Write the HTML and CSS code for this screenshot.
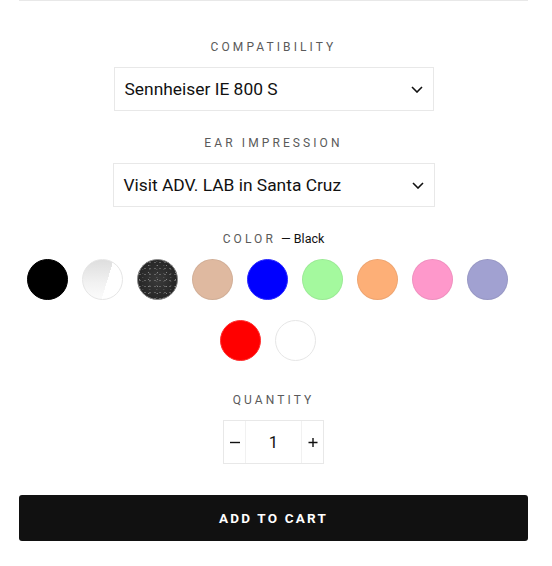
FILE: index.html
```html
<!DOCTYPE html>
<html lang="en">
<head>
<meta charset="utf-8">
<title>Product form</title>
<link rel="stylesheet" href="styles.css">
</head>
<body>
<form class="product-form">
  <div class="field">
    <div class="field-label">Compatibility</div>
    <div class="select select-compat">
      <span class="select-value">Sennheiser IE 800 S</span>
      <svg class="chevron" width="12" height="7" viewBox="0 0 12 7"><path d="M1 1l5 5 5-5" fill="none" stroke="#111" stroke-width="1.6"/></svg>
    </div>
  </div>
  <div class="field">
    <div class="field-label">Ear Impression</div>
    <div class="select select-ear">
      <span class="select-value">Visit ADV. LAB in Santa Cruz</span>
      <svg class="chevron" width="12" height="7" viewBox="0 0 12 7"><path d="M1 1l5 5 5-5" fill="none" stroke="#111" stroke-width="1.6"/></svg>
    </div>
  </div>
  <div class="field field-color">
    <div class="field-label">Color<span class="field-current">— Black</span></div>
    <div class="swatches">
      <span class="swatch swatch-black"></span>
      <span class="swatch swatch-clear"></span>
      <span class="swatch swatch-glitter"></span>
      <span class="swatch swatch-tan"></span>
      <span class="swatch swatch-blue"></span>
      <span class="swatch swatch-green"></span>
      <span class="swatch swatch-orange"></span>
      <span class="swatch swatch-pink"></span>
      <span class="swatch swatch-lavender"></span>
      <span class="swatch swatch-red"></span>
      <span class="swatch swatch-white"></span>
    </div>
  </div>
  <div class="field">
    <div class="field-label">Quantity</div>
    <div class="qty">
      <span class="qty-btn" aria-label="Decrease"><svg width="10" height="10" viewBox="0 0 10 10"><path d="M0 5.5h10" stroke="#111" stroke-width="1.4"/></svg></span>
      <span class="qty-value">1</span>
      <span class="qty-btn" aria-label="Increase"><svg width="10" height="10" viewBox="0 0 10 10"><path d="M0.5 5.5h9M5 1v9" stroke="#111" stroke-width="1.4"/></svg></span>
    </div>
  </div>
  <button type="button" class="add-to-cart">Add to cart</button>
</form>
</body>
</html>
```
FILE: styles.css
```css
html, body {
  margin: 0;
  padding: 0;
  background: #fff;
}
body {
  font-family: Roboto, "Liberation Sans", sans-serif;
  color: #111;
}
.product-form {
  margin: 0 24px 0 19px;
  border-top: 1px solid #e8e8e8;
  padding-top: 36px;
  display: flex;
  flex-direction: column;
  align-items: center;
}
.field {
  display: flex;
  flex-direction: column;
  align-items: center;
  gap: 11px;
  margin-bottom: 22px;
  width: 100%;
}
.field-color {
  margin-bottom: 29px;
}
.field-label {
  padding-top: 1px;
  font-size: 12px;
  line-height: 18px;
  letter-spacing: 3.1px;
  text-transform: uppercase;
  color: #5a5a5a;
  text-align: center;
}
.field-current {
  letter-spacing: 0;
  text-transform: none;
  color: #111;
  font-size: 12.5px;
  margin-left: 5px;
}
.select {
  box-sizing: border-box;
  height: 44px;
  border: 1px solid #e8e8e8;
  display: flex;
  align-items: center;
  justify-content: space-between;
  padding: 0 10px 0 10px;
  font-size: 17.4px;
  color: #111;
}
.select-compat { width: 320px; }
.select-ear { width: 322px; }
.chevron { flex: none; }
.swatches {
  box-sizing: border-box;
  width: 100%;
  padding-right: 12px;
  display: flex;
  flex-wrap: wrap;
  justify-content: center;
  gap: 20px 14px;
}
.swatch {
  box-sizing: border-box;
  width: 41px;
  height: 41px;
  border-radius: 50%;
  border: 1px solid rgba(0, 0, 0, 0.06);
}
.swatch-black { background: #000; border-color: #000; }
.swatch-clear {
  border-color: #e6e6e6;
  background:
    linear-gradient(107deg, transparent 60%, #fff 60%),
    linear-gradient(180deg, #dedede 0%, #f2f2f2 60%, #fbfbfb 100%);
}
.swatch-glitter {
  border-color: #8a8a8a;
  background-color: #2b2b2b;
  background-image:
    radial-gradient(circle at 40% 40%, #a8a8a8 0, rgba(168,168,168,0) 0.9px),
    radial-gradient(circle at 70% 30%, #7c7c7c 0, rgba(124,124,124,0) 0.8px),
    radial-gradient(circle at 20% 80%, #c8c8c8 0, rgba(200,200,200,0) 0.7px),
    radial-gradient(circle at 50% 50%, #3a3a3a 0, #1e1e1e 100%);
  background-size: 5px 6px, 7px 4px, 9px 7px, 100% 100%;
}
.swatch-tan { background: #dfb9a0; }
.swatch-blue { background: #0000ff; border-color: #2a2aff; }
.swatch-green { background: #a4f99e; }
.swatch-orange { background: #fdaf77; }
.swatch-pink { background: #fe98cb; }
.swatch-lavender { background: #a1a1d1; }
.swatch-red { background: #ff0000; border-color: #ff3030; }
.swatch-white { background: #fff; border-color: #e6e6e6; }
.qty {
  display: flex;
  height: 44px;
  border: 1px solid #e8e8e8;
  box-sizing: border-box;
}
.qty-btn {
  width: 21px;
  display: flex;
  align-items: center;
  justify-content: center;
}
.qty-value {
  box-sizing: border-box;
  width: 57px;
  border-left: 1px solid #f1f1f1;
  border-right: 1px solid #f1f1f1;
  display: flex;
  align-items: center;
  justify-content: center;
  font-size: 16.5px;
  color: #111;
}
.add-to-cart {
  margin-top: 9px;
  width: 100%;
  height: 46px;
  border: 0;
  border-radius: 3px;
  background: #111;
  color: #fff;
  font-family: Roboto, "Liberation Sans", sans-serif;
  font-weight: 700;
  font-size: 13.5px;
  letter-spacing: 2.2px;
  text-transform: uppercase;
  padding: 0;
}
```
